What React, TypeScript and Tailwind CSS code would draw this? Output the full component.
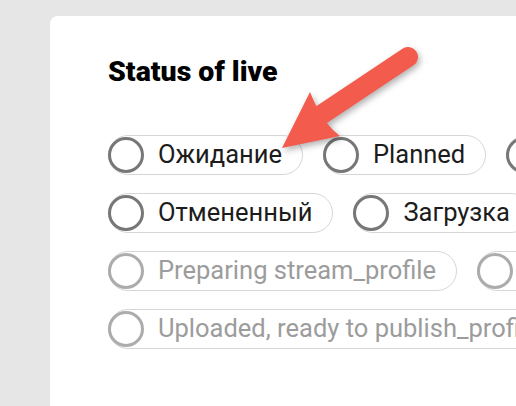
import React from "react";

type Option = { label: string; disabled?: boolean };

const rows: Option[][] = [
  [{ label: "Ожидание" }, { label: "Planned" }, { label: "Прямой эфир" }],
  [{ label: "Отмененный" }, { label: "Загрузка" }],
  [{ label: "Preparing stream_profile", disabled: true }, { label: "Ready", disabled: true }],
  [{ label: "Uploaded, ready to publish_profile", disabled: true }],
];

function RadioPill({ label, disabled }: Option) {
  return (
    <label
      className={
        "flex items-center h-10 shrink-0 rounded-full border border-[#d6d6d6] pr-5 " +
        (disabled ? "text-[#9c9c9c]" : "text-[#1c1c1c]")
      }
    >
      <span
        className={
          "w-9 h-9 rounded-full border-[3px] bg-white shrink-0 -ml-px " +
          (disabled ? "border-[#acacac]" : "border-[#777777]")
        }
      />
      <span className="ml-[14px] text-[25.5px] leading-none whitespace-nowrap">{label}</span>
    </label>
  );
}

export default function App() {
  return (
    <div className="relative w-[516px] h-[406px] overflow-hidden bg-[#e6e6e6] font-['Roboto',sans-serif]">
      <div className="ml-[50px] mt-4 h-[420px] w-[520px] bg-white rounded-tl-lg pl-[58px] pt-[42px]">
        <h2 className="text-[28.5px] leading-none font-black text-black">Status of live</h2>
        <div className="mt-[48px] flex flex-col gap-[18px]">
          {rows.map((row, i) => (
            <div key={i} className="flex gap-5">
              {row.map((o) => (
                <RadioPill key={o.label} {...o} />
              ))}
            </div>
          ))}
        </div>
      </div>

      {/* arrow overlay */}
      <svg
        className="absolute left-0 top-0 pointer-events-none"
        width="516"
        height="406"
        style={{ filter: "drop-shadow(2px 3px 3px rgba(0,0,0,0.3))" }}
      >
        <line x1="318" y1="117" x2="408" y2="57" stroke="#f35b4d" strokeWidth="20" strokeLinecap="round" />
        <path d="M282 148 L310 92 Q318 112 326 122 Q332 130 340 136 Z" fill="#f35b4d" />
      </svg>
    </div>
  );
}
